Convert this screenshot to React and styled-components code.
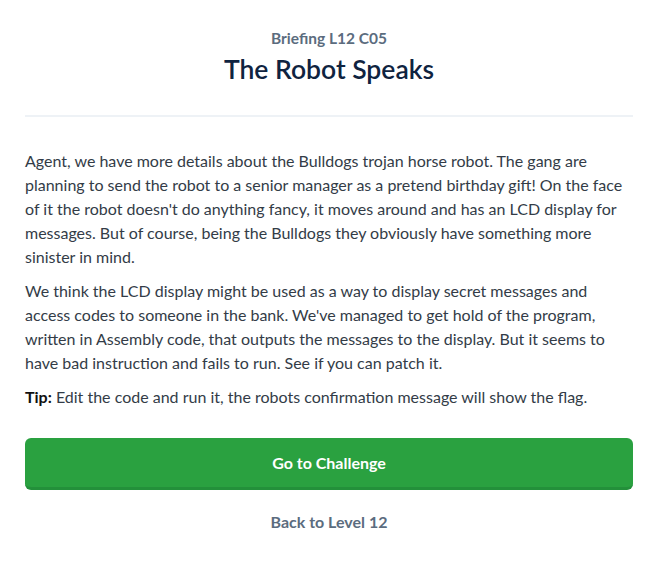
import React from 'react'
import styled, { createGlobalStyle } from 'styled-components'

const GlobalStyle = createGlobalStyle`
  body {
    margin: 0;
    background: #ffffff;
    font-family: Lato, "Open Sans", Arial, sans-serif;
  }
`

const Page = styled.div`
  padding: 28px 29px 0 25px;
  display: flex;
  flex-direction: column;
`

const Header = styled.header`
  display: flex;
  flex-direction: column;
  align-items: center;
  padding-bottom: 29px;
  border-bottom: 2px solid #eef2f6;
`

const Kicker = styled.p`
  margin: 0;
  font-size: 15.5px;
  line-height: 20px;
  font-weight: 700;
  color: #5b6c7e;
`

const Title = styled.h1`
  margin: 4px 0 0;
  font-size: 26.5px;
  line-height: 34px;
  font-weight: 600;
  color: #0f2340;
`

const Body = styled.div`
  padding-top: 32px;
  display: flex;
  flex-direction: column;
  gap: 10px;
`

const Para = styled.p`
  margin: 0;
  font-size: 16px;
  line-height: 24px;
  color: #333c47;
`

const Strong = styled.strong`
  font-weight: 700;
  color: #111;
`

const Button = styled.button`
  margin-top: 29px;
  height: 52px;
  border: none;
  border-bottom: 3px solid #23903a;
  border-radius: 6px;
  background: #2aa140;
  color: #fff;
  font-family: inherit;
  font-size: 16px;
  font-weight: 700;
  cursor: pointer;
`

const BackLink = styled.a`
  align-self: center;
  margin-top: 22px;
  font-size: 16px;
  line-height: 20px;
  font-weight: 700;
  color: #5b6c7e;
  text-decoration: none;
`

export default function App() {
  return (
    <>
      <GlobalStyle />
      <Page>
        <Header>
          <Kicker>Briefing L12 C05</Kicker>
          <Title>The Robot Speaks</Title>
        </Header>
        <Body>
          <Para>
            Agent, we have more details about the Bulldogs trojan horse robot. The gang are
            planning to send the robot to a senior manager as a pretend birthday gift! On the face
            of it the robot doesn't do anything fancy, it moves around and has an LCD display for
            messages. But of course, being the Bulldogs they obviously have something more
            sinister in mind.
          </Para>
          <Para>
            We think the LCD display might be used as a way to display secret messages and
            access codes to someone in the bank. We've managed to get hold of the program,
            written in Assembly code, that outputs the messages to the display. But it seems to
            have bad instruction and fails to run. See if you can patch it.
          </Para>
          <Para>
            <Strong>Tip:</Strong> Edit the code and run it, the robots confirmation message will show the flag.
          </Para>
        </Body>
        <Button>Go to Challenge</Button>
        <BackLink href="#">Back to Level 12</BackLink>
      </Page>
    </>
  )
}
